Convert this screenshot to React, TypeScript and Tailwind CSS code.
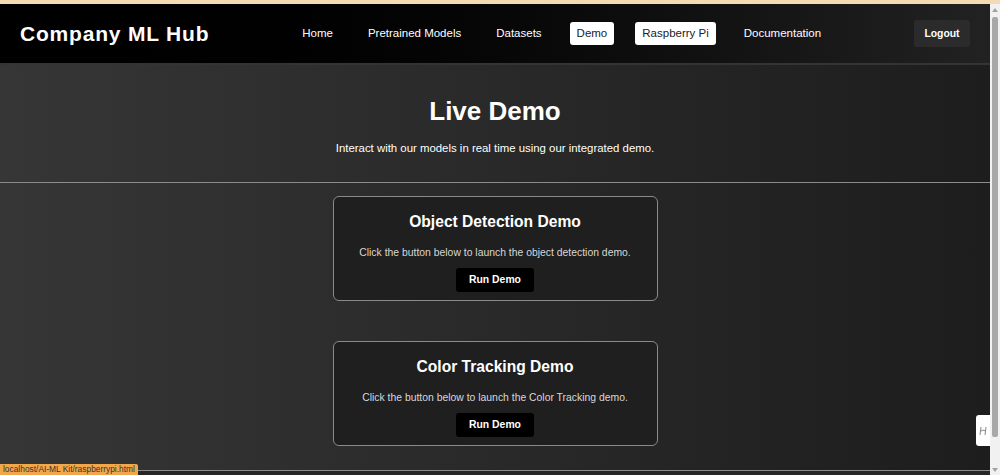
import React from "react";

const font = { fontFamily: '"Liberation Sans", Arial, sans-serif' };

function Card({ title, desc }: { title: string; desc: string }) {
  return (
    <div className="w-[325px] h-[105px] mx-auto rounded-[6px] border border-[#8a8a8a] bg-[#1f1f1f] flex flex-col items-center pt-[15px]">
      <h2 className="text-[15.6px] leading-[20px] font-bold text-white">{title}</h2>
      <p className="mt-[14px] text-[10.4px] leading-[13px] text-[#d8d8d8]">{desc}</p>
      <button className="mt-[9px] w-[78px] h-[24px] bg-black rounded-[3px] text-white text-[10.4px] font-bold">
        Run Demo
      </button>
    </div>
  );
}

export default function App() {
  const nav = ["Home", "Pretrained Models", "Datasets", "Demo", "Raspberry Pi", "Documentation"];
  return (
    <div style={font} className="relative w-[1000px] h-[475px] overflow-hidden bg-[#2a2a2a]">
      <div className="h-[4px] bg-[#f3dcb4]" />
      <div className="flex h-[471px]">
        <div className="w-[990px] flex flex-col bg-gradient-to-r from-[#363636] to-[#1d1d1d]">
          <header className="h-[61px] shrink-0 flex items-center justify-between px-[20px] bg-gradient-to-r from-[#000000] to-[#222222] border-b-2 border-[#343434]">
            <div className="text-[21px] font-bold text-white tracking-[0.8px]">Company ML Hub</div>
            <nav className="flex items-center gap-[21px]">
              {nav.map((n) => {
                const active = n === "Demo" || n === "Raspberry Pi";
                return (
                  <span
                    key={n}
                    className={
                      "px-[7px] py-[4px] text-[11.5px] leading-[15px] rounded-[3px] " +
                      (active ? "bg-white text-[#222]" : "text-white")
                    }
                  >
                    {n}
                  </span>
                );
              })}
            </nav>
            <button className="w-[56px] h-[27px] rounded-[3px] bg-[#2b2b2b] text-white text-[10.4px] font-bold">
              Logout
            </button>
          </header>
          <section className="flex flex-col items-center pt-[31px] pb-[26px] border-b border-[#8c8c8c]">
            <h1 className="text-[26px] leading-[30px] font-bold text-white">Live Demo</h1>
            <p className="mt-[14px] text-[11.4px] leading-[16px] text-white">
              Interact with our models in real time using our integrated demo.
            </p>
          </section>
          <div className="flex flex-col pt-[13px] gap-[40px]">
            <Card title="Object Detection Demo" desc="Click the button below to launch the object detection demo." />
            <Card title="Color Tracking Demo" desc="Click the button below to launch the Color Tracking demo." />
          </div>
          <div className="mt-[24px] border-t border-[#8c8c8c] flex-1 bg-[#262626]" />
        </div>
        <div className="w-[10px] bg-[#f1f1f1] flex flex-col items-center">
          <svg width="10" height="10" viewBox="0 0 10 10" className="mt-[1px]">
            <path d="M2 7 L5 3 L8 7 Z" fill="#a3a3a3" />
          </svg>
          <div className="mt-[2px] w-[6px] h-[420px] rounded-[2px] bg-[#a8a8a8]" />
          <div className="flex-1" />
          <svg width="10" height="10" viewBox="0 0 10 10">
            <path d="M2 3 L8 3 L5 7 Z" fill="#a3a3a3" />
          </svg>
        </div>
      </div>
      <div className="absolute left-[976px] top-[415px] w-[14px] h-[31px] bg-white rounded-l-[3px] flex items-center justify-center">
        <svg width="10" height="12" viewBox="0 0 10 12">
          <path d="M3 2 L2 10 M8 2 L7 10 M2 6.5 Q5 4 8 6" stroke="#888" strokeWidth="1" fill="none" />
        </svg>
      </div>
      <div className="absolute left-0 bottom-0 h-[11px] bg-[#f2a84a] rounded-tr-[2px] text-[8.4px] leading-[11px] text-[#333] px-[3px] whitespace-nowrap">
        localhost/AI-ML Kit/raspberrypi.html
      </div>
    </div>
  );
}
